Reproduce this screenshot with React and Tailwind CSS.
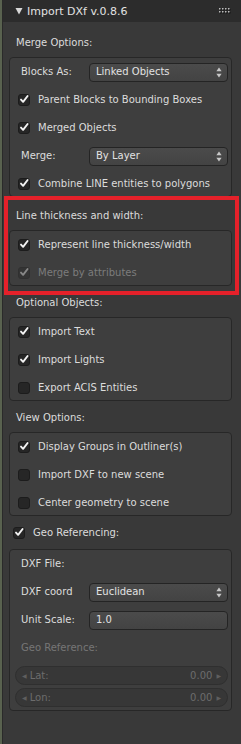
import React from 'react';

const Check = ({ checked = true, disabled = false }) => (
  <span className={`relative block w-[12px] h-[12px] shrink-0 rounded-[3px] border border-[#1c1c1c] bg-[#262626] ${disabled ? 'opacity-40' : ''}`}>
    {checked && (
      <svg className="absolute left-[-1px] top-[-1px]" width="12" height="12" viewBox="0 0 12 12">
        <path d="M3 5.6 L5.1 7.8 L9.6 2" fill="none" stroke="#f4f4f4" strokeWidth="1.9" strokeLinecap="round" strokeLinejoin="round" />
      </svg>
    )}
  </span>
);

const CheckRow = ({ label, checked = true, disabled = false }) => (
  <div className="flex items-center h-[20px] gap-[8px]">
    <Check checked={checked} disabled={disabled} />
    <span className={disabled ? 'text-[#7c7c7c]' : 'text-[#dcdcdc]'}>{label}</span>
  </div>
);

const UpDown = () => (
  <svg width="6" height="11" viewBox="0 0 6 11">
    <path d="M3 0.5 L5.6 4.2 L0.4 4.2 Z" fill="#c8c8c8" />
    <path d="M3 10.5 L5.6 6.8 L0.4 6.8 Z" fill="#c8c8c8" />
  </svg>
);

const Field = ({ label, value, menu = false }) => (
  <div className="flex items-center h-[20px]">
    <span className="w-[68px] ml-[3px] text-[#dcdcdc]">{label}</span>
    <div className="flex-1 h-[19px] flex items-center rounded-[4px] border border-[#242424] bg-gradient-to-b from-[#4b4b4b] to-[#434343] pl-[6px] pr-[5px] text-[#e2e2e2]">
      <span className="flex-1">{value}</span>
      {menu && <UpDown />}
    </div>
  </div>
);

const Slider = ({ label, value }) => (
  <div className="-ml-[3px] h-[19px] flex items-center rounded-full border border-[#2f2f2f] bg-[#373737] px-[6px] text-[#6c6c6c]">
    <span className="text-[6px] mr-[3px] text-[#5e5e5e]">◀</span>
    <span className="flex-1">{label}</span>
    <span>{value}</span>
    <span className="text-[6px] ml-[4px] text-[#5e5e5e]">▶</span>
  </div>
);

const Box = ({ children, className = '' }) => (
  <div className={`ml-[6px] mr-[9px] rounded-[4px] border border-[#272727] bg-[#3e3e3e] pl-[8px] pr-[3px] pt-[4px] pb-[2px] flex flex-col gap-[8px] ${className}`}>
    {children}
  </div>
);

const Label = ({ children }) => (
  <div className="h-[20px] flex items-center pl-[13px] mb-[4px] text-[#dcdcdc]">{children}</div>
);

export default function App() {
  return (
    <div className="relative flex w-[241px] h-[744px] bg-[#393939] font-['DejaVu_Sans',sans-serif] text-[10px] leading-none overflow-hidden">
      <div className="w-[2px] bg-[#59624f]" />
      <div className="w-[1px] bg-[#2a2a2a]" />
      <div className="flex-1 flex flex-col">
        <div className="h-[22px] bg-[#2c2c2c] flex items-center pl-[12px] pr-[10px]">
          <svg width="8" height="8" viewBox="0 0 8 8">
            <path d="M0.5 1 L7.5 1 L4 7.5 Z" fill="#d8d8d8" />
          </svg>
          <span className="ml-[4px] flex-1 text-[11px] text-[#e2e2e2]">Import DXf v.0.8.6</span>
          <svg width="12" height="6" viewBox="0 0 12 6">
            {[0, 3, 6, 9].map((x) =>
              [0, 3].map((y) => (
                <g key={`${x}-${y}`}>
                  <rect x={x + 1} y={y + 1} width="1.5" height="1.5" fill="#111" />
                  <rect x={x} y={y} width="1.5" height="1.5" fill="#bdbdbd" />
                </g>
              ))
            )}
          </svg>
        </div>

        <div className="mt-[11px]">
          <Label>Merge Options:</Label>
          <Box>
            <Field label="Blocks As:" value="Linked Objects" menu />
            <CheckRow label="Parent Blocks to Bounding Boxes" />
            <CheckRow label="Merged Objects" />
            <Field label="Merge:" value="By Layer" menu />
            <CheckRow label="Combine LINE entities to polygons" />
          </Box>
        </div>

        <div className="mt-[9px]">
          <Label>Line thickness and width:</Label>
          <Box>
            <CheckRow label="Represent line thickness/width" />
            <CheckRow label="Merge by attributes" disabled />
          </Box>
        </div>

        <div className="mt-[7px]">
          <Label>Optional Objects:</Label>
          <Box>
            <CheckRow label="Import Text" />
            <CheckRow label="Import Lights" />
            <CheckRow label="Export ACIS Entities" checked={false} />
          </Box>
        </div>

        <div className="mt-[7px]">
          <Label>View Options:</Label>
          <Box>
            <CheckRow label="Display Groups in Outliner(s)" />
            <CheckRow label="Import DXF to new scene" checked={false} />
            <CheckRow label="Center geometry to scene" checked={false} />
          </Box>
        </div>

        <div className="mt-[7px]">
          <div className="h-[20px] flex items-center pl-[10px] mb-[6px]">
            <CheckRow label="Geo Referencing:" />
          </div>
          <Box className="pb-[3px]">
            <div className="h-[20px] flex items-center ml-[3px] text-[#dcdcdc]">DXF File:</div>
            <Field label="DXF coord" value="Euclidean" menu />
            <Field label="Unit Scale:" value="1.0" />
            <div className="h-[20px] flex items-center ml-[3px] text-[#767676]">Geo Reference:</div>
            <div className="flex flex-col gap-[3px]">
              <Slider label="Lat:" value="0.00" />
              <Slider label="Lon:" value="0.00" />
            </div>
          </Box>
        </div>
      </div>

      <div className="absolute left-[4px] top-[196px] w-[235px] h-[99px] border-[4px] border-[#e5212a] pointer-events-none" />
    </div>
  );
}
